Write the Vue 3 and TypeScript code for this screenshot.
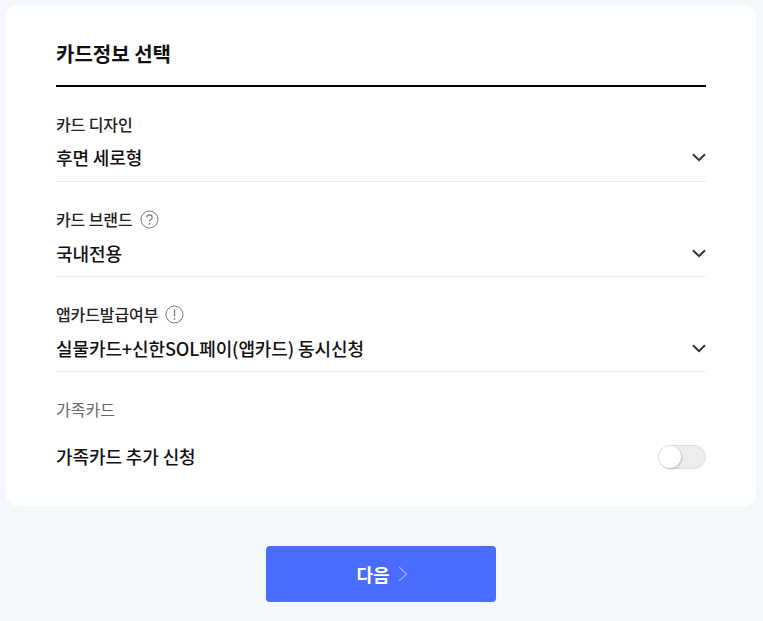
<script setup lang="ts">
interface Field { label: string; value: string; icon?: 'q' | 'e' }
const fields: Field[] = [
  { label: '카드 디자인', value: '후면 세로형' },
  { label: '카드 브랜드', value: '국내전용', icon: 'q' },
  { label: '앱카드발급여부', value: '실물카드+신한SOL페이(앱카드) 동시신청', icon: 'e' },
]
</script>

<template>
  <div class="page">
    <section class="card">
      <h2 class="title">카드정보 선택</h2>
      <div v-for="f in fields" :key="f.label" class="field">
        <div class="label">
          <span>{{ f.label }}</span>
          <svg v-if="f.icon" class="info" width="19" height="19" viewBox="0 0 19 19" fill="none">
            <circle cx="9.5" cy="9.5" r="8.5" stroke="#777" />
            <path v-if="f.icon === 'q'" d="M6.8 7.4c0-1.6 1.2-2.5 2.7-2.5s2.7.9 2.7 2.3c0 1.1-.6 1.7-1.4 2.2-.8.5-1.3 1-1.3 1.9v.3" stroke="#777" stroke-width="1.2" />
            <path v-else d="M9.5 4.6v7" stroke="#777" stroke-width="1.2" />
            <circle cx="9.5" cy="13.9" r=".85" fill="#777" />
          </svg>
        </div>
        <div class="select">
          <span>{{ f.value }}</span>
          <svg class="chev" width="14" height="9" viewBox="0 0 14 9" fill="none">
            <path d="M1 1.2l6 6 6-6" stroke="#333" stroke-width="2" />
          </svg>
        </div>
      </div>
      <div class="family">
        <div class="family-label">가족카드</div>
        <div class="family-row">
          <span>가족카드 추가 신청</span>
          <span class="switch"><span class="knob"></span></span>
        </div>
      </div>
    </section>
    <div class="actions">
      <button class="next" type="button">
        <span>다음</span>
        <svg width="10" height="16" viewBox="0 0 10 16" fill="none">
          <path d="M1 1l7.5 7L1 15" stroke="#9db0ff" stroke-width="1.2" />
        </svg>
      </button>
    </div>
  </div>
</template>

<style>
html, body { margin: 0; background: #f4f7fc; }
</style>

<style scoped>
.page {
  width: 763px;
  height: 621px;
  box-sizing: border-box;
  padding: 5px 7px 0 6px;
  background: #f4f7fc;
  font-family: "Noto Sans CJK KR", "Noto Sans", sans-serif;
  color: #111;
  overflow: hidden;
}
.card {
  height: 501px;
  box-sizing: border-box;
  padding: 0 50px;
  background: #fff;
  border-radius: 12px;
}
.title {
  margin: 0;
  height: 82px;
  box-sizing: border-box;
  padding-top: 33px;
  font-size: 20px;
  line-height: 32px;
  font-weight: 700;
  border-bottom: 2px solid #000;
}
.field {
  height: 95px;
  box-sizing: border-box;
  border-bottom: 1px solid #e9ecef;
  padding-top: 25px;
}
.label {
  display: flex;
  align-items: center;
  gap: 7px;
  height: 24px;
  font-size: 16px;
  line-height: 24px;
  font-weight: 500;
  letter-spacing: -0.1px;
  color: #222;
}
.info { flex: none; }
.select {
  display: flex;
  justify-content: space-between;
  align-items: center;
  height: 28px;
  margin-top: 8px;
  font-size: 18px;
  line-height: 28px;
  font-weight: 500;
  letter-spacing: -0.1px;
}
.field:first-of-type .select { margin-top: 7px; }
.family { padding-top: 25px; }
.family-label {
  height: 24px;
  font-size: 16px;
  line-height: 24px;
  font-weight: 400;
  color: #666;
}
.family-row {
  display: flex;
  justify-content: space-between;
  align-items: center;
  height: 28px;
  margin-top: 21px;
  font-size: 18px;
  line-height: 28px;
  font-weight: 500;
  letter-spacing: -0.1px;
}
.switch {
  display: block;
  width: 48px;
  height: 24px;
  margin-top: 2px;
  box-sizing: border-box;
  border: 1px solid #ddd;
  border-radius: 12px;
  background: #ededed;
  position: relative;
}
.knob {
  position: absolute;
  left: 0;
  top: 0;
  width: 22px;
  height: 22px;
  border-radius: 50%;
  background: #fff;
  box-shadow: 1px 1px 2px rgba(0, 0, 0, 0.2);
}
.actions {
  display: flex;
  justify-content: center;
  padding-top: 40px;
}
.next {
  width: 230px;
  height: 56px;
  padding: 0 0 0 2px;
  display: flex;
  align-items: center;
  justify-content: center;
  gap: 8px;
  border: 0;
  border-radius: 4px;
  background: #4a6cff;
  color: #fff;
  font-family: inherit;
  font-size: 18px;
  font-weight: 700;
}
</style>
